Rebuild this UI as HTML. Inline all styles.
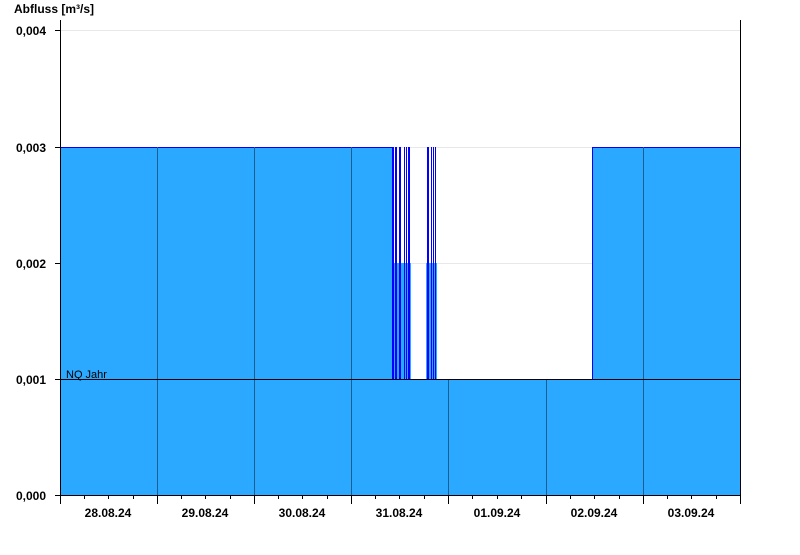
<!DOCTYPE html>
<html><head><meta charset="utf-8"><style>
body{margin:0;background:#fff;width:800px;height:550px;overflow:hidden}
svg text{font-family:"Liberation Sans",Arial,sans-serif;font-size:12px;font-weight:bold;fill:#000}
</style></head><body>
<svg width="800" height="550" viewBox="0 0 800 550">
<rect x="0" y="0" width="800" height="550" fill="#fff"/>
<g stroke="#e8e8e8" stroke-width="1">
<line x1="60" y1="30.5" x2="740" y2="30.5"/>
<line x1="60" y1="263.5" x2="740" y2="263.5"/>
<line x1="60" y1="147.5" x2="740" y2="147.5"/>
</g>
<g fill="#2ba8ff">
<rect x="60" y="147" width="333" height="348"/>
<rect x="392" y="263" width="19" height="232"/>
<rect x="426" y="263" width="11" height="232"/>
<rect x="392" y="379" width="200" height="116"/>
<rect x="592" y="147" width="148" height="348"/>
</g>
<g stroke="#0000ff" stroke-width="1">
<line x1="60" y1="147.5" x2="393" y2="147.5"/>
<line x1="592" y1="147.5" x2="740" y2="147.5"/>
<line x1="592.5" y1="147" x2="592.5" y2="379"/>
<line x1="437" y1="379.5" x2="592" y2="379.5"/>
<g>
<line x1="392.5" y1="147" x2="392.5" y2="379"/>
<line x1="393.5" y1="147" x2="393.5" y2="379"/>
<line x1="395.5" y1="147" x2="395.5" y2="379"/>
<line x1="396.5" y1="147" x2="396.5" y2="379"/>
<line x1="399.5" y1="147" x2="399.5" y2="379"/>
<line x1="400.5" y1="147" x2="400.5" y2="379"/>
<line x1="404.5" y1="147" x2="404.5" y2="379"/>
<line x1="406.5" y1="147" x2="406.5" y2="379"/>
<line x1="408.5" y1="147" x2="408.5" y2="379"/>
<line x1="409.5" y1="147" x2="409.5" y2="379"/>
<line x1="427.5" y1="147" x2="427.5" y2="379"/>
<line x1="428.5" y1="147" x2="428.5" y2="379"/>
<line x1="431.5" y1="147" x2="431.5" y2="379"/>
<line x1="433.5" y1="147" x2="433.5" y2="379"/>
<line x1="435.5" y1="147" x2="435.5" y2="379"/>
</g>
</g>
<g stroke="#1b5f8f" stroke-width="1">
<line x1="157.5" y1="147" x2="157.5" y2="495"/>
<line x1="254.5" y1="147" x2="254.5" y2="495"/>
<line x1="351.5" y1="147" x2="351.5" y2="495"/>
<line x1="448.5" y1="379" x2="448.5" y2="495"/>
<line x1="546.5" y1="379" x2="546.5" y2="495"/>
<line x1="643.5" y1="147" x2="643.5" y2="495"/>
</g>
<line x1="60" y1="379.5" x2="740" y2="379.5" stroke="#000"/>
<text x="66" y="378" style="font-weight:normal;font-size:11px">NQ Jahr</text>
<g stroke="#000" stroke-width="1">
<line x1="60.5" y1="20" x2="60.5" y2="495"/>
<line x1="740.5" y1="20" x2="740.5" y2="495"/>
<line x1="55" y1="495.5" x2="741" y2="495.5"/>
<line x1="55" y1="30.5" x2="60" y2="30.5"/>
<line x1="55" y1="147.5" x2="60" y2="147.5"/>
<line x1="55" y1="263.5" x2="60" y2="263.5"/>
<line x1="55" y1="379.5" x2="60" y2="379.5"/>
<line x1="60.5" y1="495" x2="60.5" y2="504"/>
<line x1="157.5" y1="495" x2="157.5" y2="504"/>
<line x1="254.5" y1="495" x2="254.5" y2="504"/>
<line x1="351.5" y1="495" x2="351.5" y2="504"/>
<line x1="448.5" y1="495" x2="448.5" y2="504"/>
<line x1="546.5" y1="495" x2="546.5" y2="504"/>
<line x1="643.5" y1="495" x2="643.5" y2="504"/>
<line x1="740.5" y1="495" x2="740.5" y2="504"/>
</g>
<g stroke="#000" stroke-width="1" id="minor">
<line x1="84.5" y1="495" x2="84.5" y2="499"/><line x1="108.5" y1="495" x2="108.5" y2="499"/><line x1="133.5" y1="495" x2="133.5" y2="499"/>
<line x1="181.5" y1="495" x2="181.5" y2="499"/><line x1="205.5" y1="495" x2="205.5" y2="499"/><line x1="230.5" y1="495" x2="230.5" y2="499"/>
<line x1="278.5" y1="495" x2="278.5" y2="499"/><line x1="302.5" y1="495" x2="302.5" y2="499"/><line x1="327.5" y1="495" x2="327.5" y2="499"/>
<line x1="375.5" y1="495" x2="375.5" y2="499"/><line x1="399.5" y1="495" x2="399.5" y2="499"/><line x1="424.5" y1="495" x2="424.5" y2="499"/>
<line x1="472.5" y1="495" x2="472.5" y2="499"/><line x1="497.5" y1="495" x2="497.5" y2="499"/><line x1="521.5" y1="495" x2="521.5" y2="499"/>
<line x1="570.5" y1="495" x2="570.5" y2="499"/><line x1="594.5" y1="495" x2="594.5" y2="499"/><line x1="619.5" y1="495" x2="619.5" y2="499"/>
<line x1="667.5" y1="495" x2="667.5" y2="499"/><line x1="691.5" y1="495" x2="691.5" y2="499"/><line x1="716.5" y1="495" x2="716.5" y2="499"/>
</g>
<text x="14" y="13">Abfluss [m³/s]</text>
<g text-anchor="end">
<text x="46" y="35">0,004</text>
<text x="46" y="152">0,003</text>
<text x="46" y="268">0,002</text>
<text x="46" y="384">0,001</text>
<text x="46" y="500">0,000</text>
</g>
<g text-anchor="middle">
<text x="108" y="517">28.08.24</text>
<text x="205" y="517">29.08.24</text>
<text x="302" y="517">30.08.24</text>
<text x="399" y="517">31.08.24</text>
<text x="497" y="517">01.09.24</text>
<text x="594" y="517">02.09.24</text>
<text x="691" y="517">03.09.24</text>
</g>
</svg>
</body></html>
